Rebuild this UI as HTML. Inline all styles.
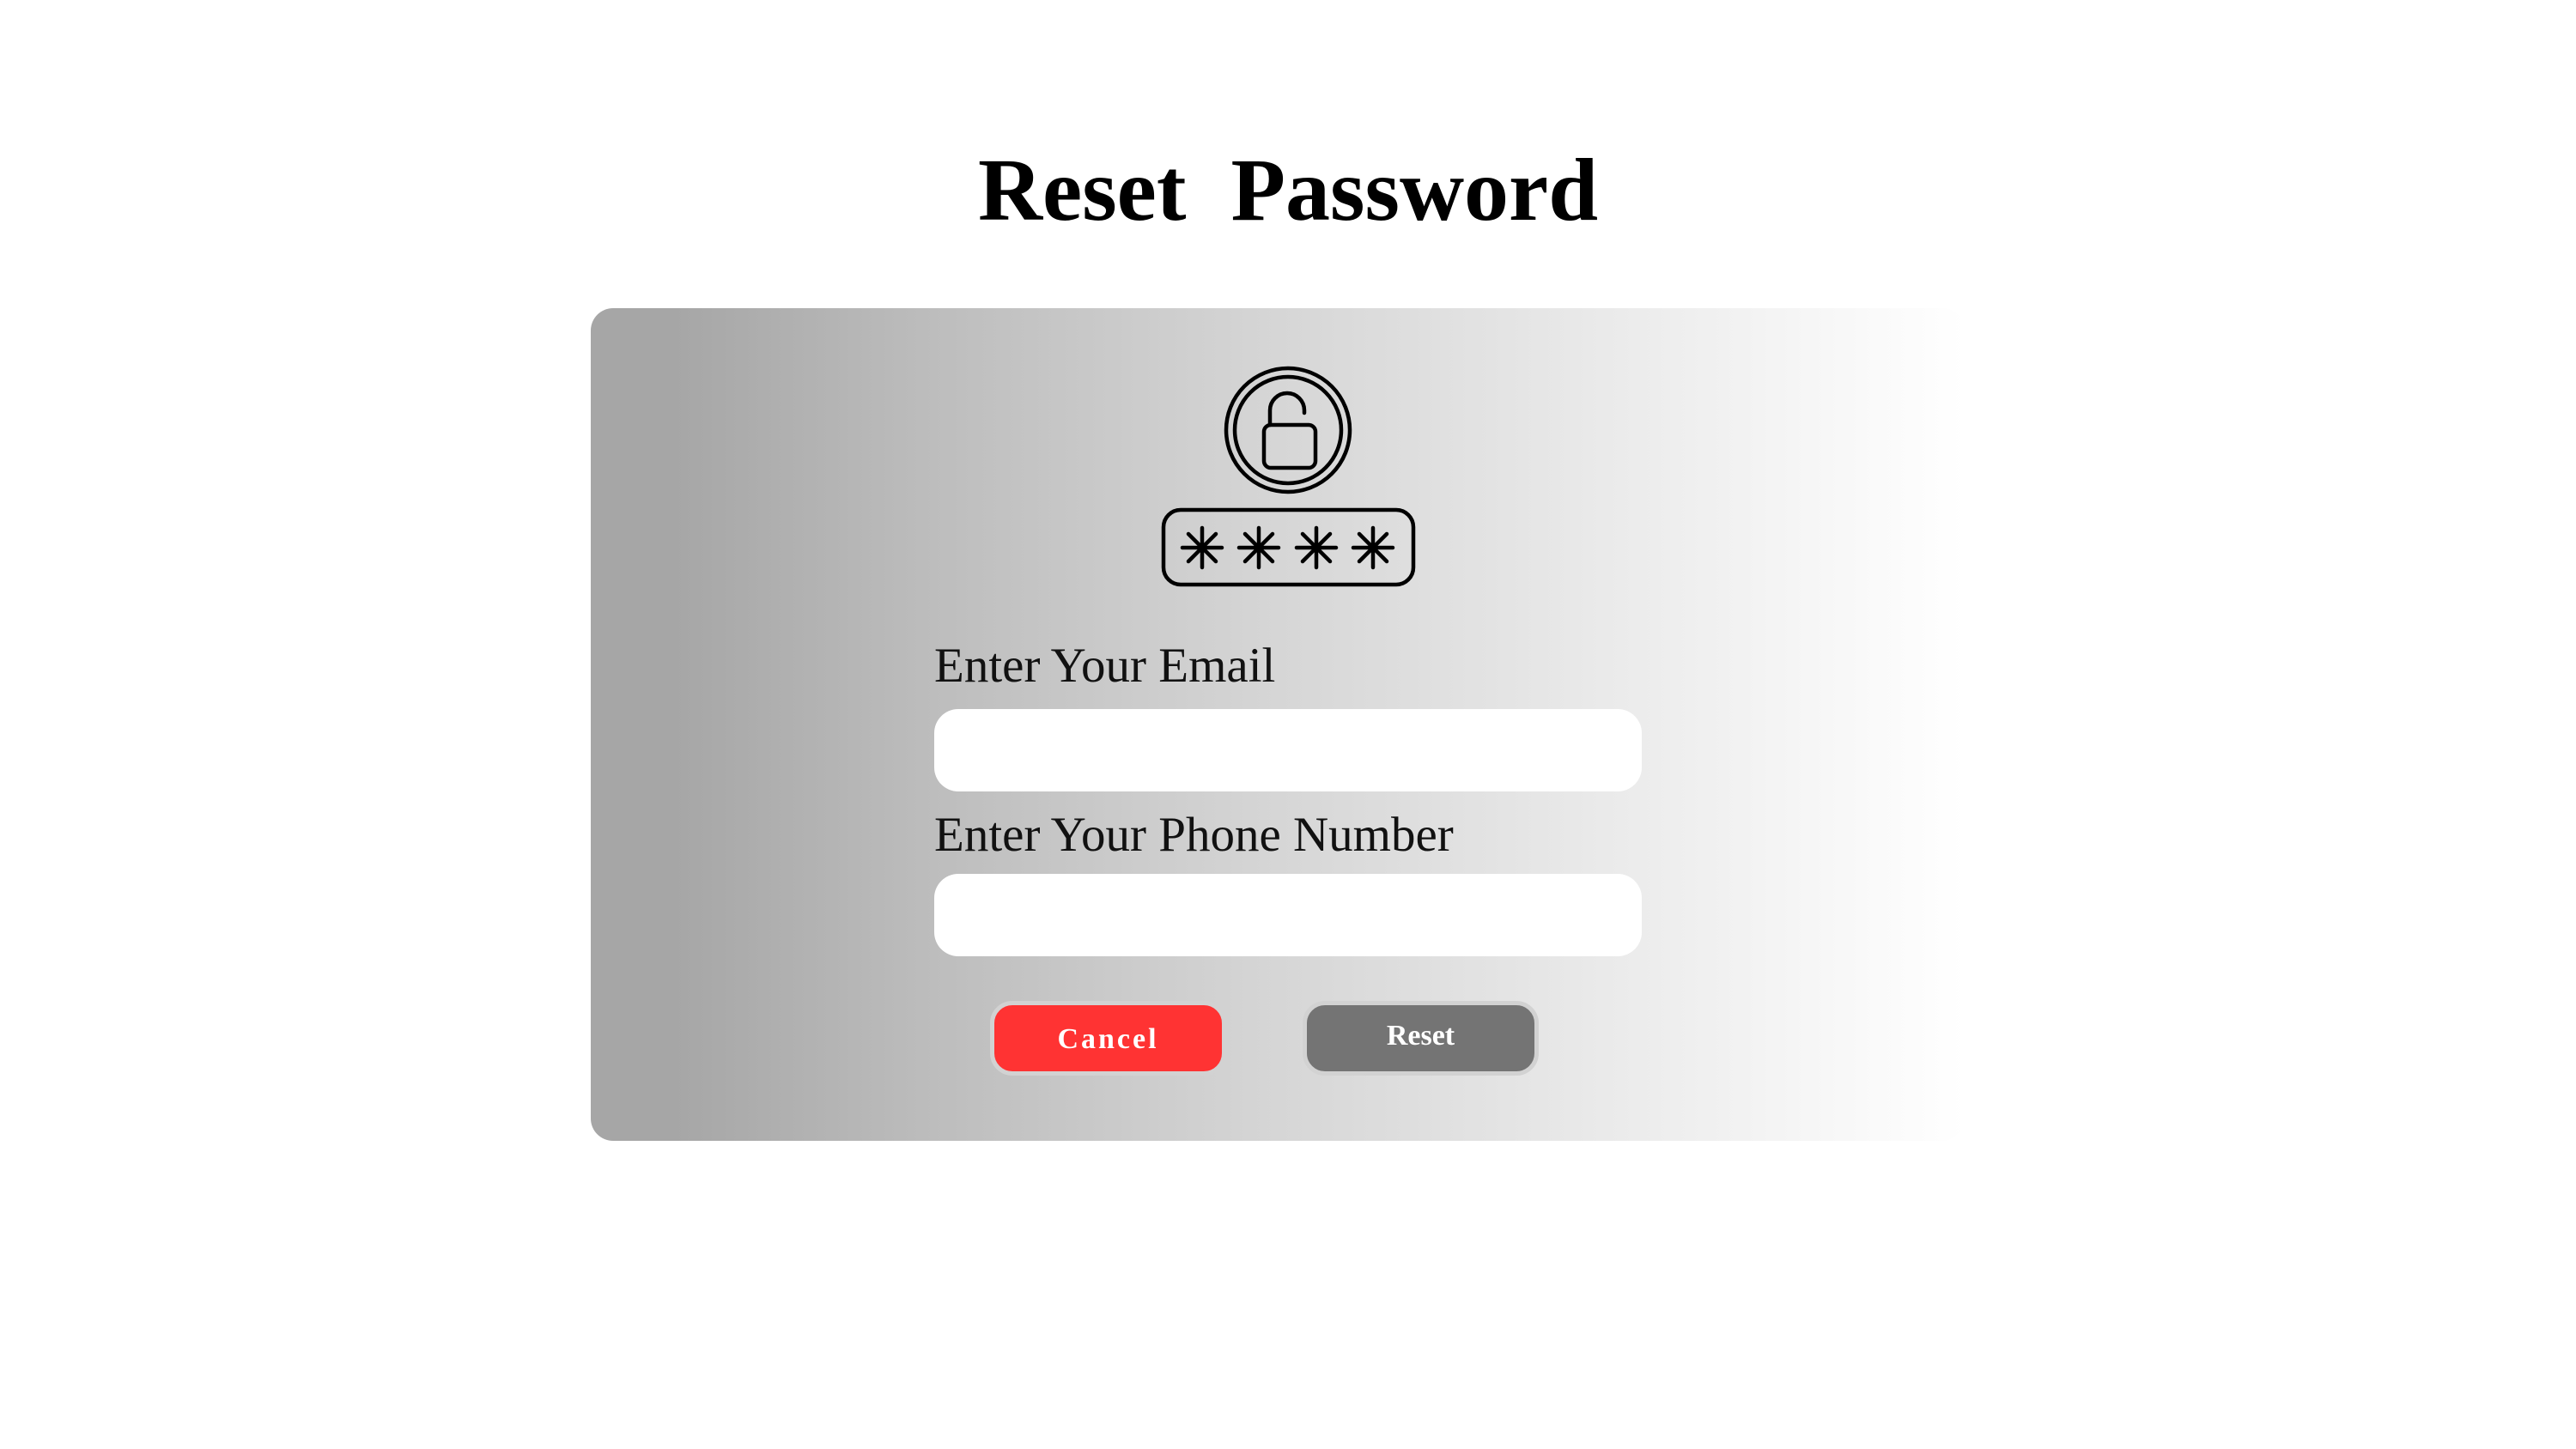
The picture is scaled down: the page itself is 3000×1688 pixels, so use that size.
<!DOCTYPE html>
<html><head><style>
html,body{margin:0;padding:0;background:#fff;width:3000px;height:1688px;overflow:hidden;position:relative;font-family:"Liberation Serif",serif}
.title{position:absolute;left:0;width:3000px;top:222px;text-align:center;font-weight:bold;font-size:104px;line-height:0;white-space:pre;color:#000}
.card{position:absolute;left:688px;top:359px;width:1600px;height:970px;border-radius:26px;background:linear-gradient(90deg,#a6a6a6 6%,#bdbdbd 25%,#d6d6d6 50%,#ebebeb 75%,#fff 100%)}
.lbl{position:absolute;left:1088px;font-size:57px;line-height:0;color:#111}
.inp{position:absolute;left:1088px;width:824px;height:96px;background:#fff;border-radius:28px}
.btn{position:absolute;top:1166px;height:87px;width:275px;border-radius:26px;box-sizing:border-box;border:5px solid #d2d2d2;color:#fff;font-weight:bold;font-size:34px;text-align:center}
</style></head><body>
<div class="title">Reset  Password</div>
<div class="card"></div>
<svg style="position:absolute;left:0;top:0" width="3000" height="1688">
<g fill="none" stroke="#000" stroke-width="4.5" stroke-linecap="round">
<circle cx="1500" cy="501" r="72"/>
<circle cx="1500" cy="501" r="62"/>
<rect x="1472" y="495" width="60" height="50" rx="8"/>
<path d="M1479 495 V478 a20 20 0 0 1 40 0 v3"/>
<rect x="1355" y="594" width="291" height="87" rx="20"/>
<g id="a">
<path d="M1400 615 v46 M1377 638 h46 M1384 622 l32 32 M1416 622 l-32 32"/>
</g>
<use href="#a" x="66"/><use href="#a" x="133"/><use href="#a" x="199"/>
</g>
</svg>
<div class="lbl" style="top:776px">Enter Your Email</div>
<div class="inp" style="top:826px"></div>
<div class="lbl" style="top:973px">Enter Your Phone Number</div>
<div class="inp" style="top:1018px"></div>
<div class="btn" style="left:1153px;background:#ff3333;line-height:80px;letter-spacing:3px">Cancel</div>
<div class="btn" style="left:1517px;background:#747474;line-height:72px">Reset</div>
</body></html>
